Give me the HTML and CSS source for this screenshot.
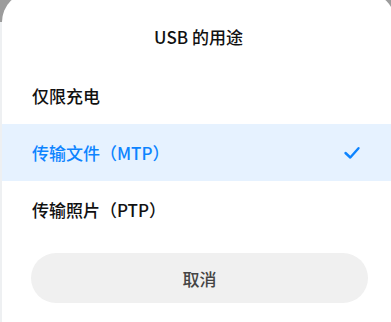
FILE: index.html
```html
<!DOCTYPE html>
<html lang="zh">
<head>
<meta charset="utf-8">
<link rel="stylesheet" href="styles.css">
</head>
<body>
<div class="sheet">
  <div class="title">USB 的用途</div>
  <div class="list">
    <div class="item">仅限充电</div>
    <div class="item selected">传输文件（MTP）
      <svg class="check" width="18" height="14" viewBox="0 0 18 14"><path d="M2.5 7 L7.3 11.5 L15.5 2.2" fill="none" stroke="#0d84ff" stroke-width="2.4" stroke-linecap="round" stroke-linejoin="round"/></svg>
    </div>
    <div class="item">传输照片（PTP）</div>
  </div>
  <div class="actions">
    <div class="cancel">取消</div>
  </div>
</div>
</body>
</html>
```
FILE: styles.css
```css
html, body {
  margin: 0;
  padding: 0;
  width: 391px;
  height: 322px;
  overflow: hidden;
}
body {
  background: linear-gradient(#9c9c9c 0, #9c9c9c 22px, #eef0f2 22px);
  font-family: "Noto Sans CJK SC", "Noto Sans", sans-serif;
}
.sheet {
  margin-top: -8px;
  margin-left: 2px;
  width: 393px;
  height: 340px;
  background: #fff;
  border-radius: 30px 30px 0 0;
  padding-top: 8px;
  box-sizing: border-box;
}
.title {
  height: 62px;
  padding-top: 5px;
  display: flex;
  align-items: center;
  justify-content: center;
  font-size: 17px;
  font-weight: 500;
  color: #111;
}
.list {
  display: flex;
  flex-direction: column;
}
.item {
  height: 57px;
  display: flex;
  align-items: center;
  justify-content: space-between;
  padding: 0 31px 0 30px;
  font-size: 17px;
  color: #111;
  font-weight: 500;
}
.item.selected {
  background: #e6f2ff;
  color: #0d84ff;
}
.check {
  display: block;
  margin-right: 3px;
}
.actions {
  padding: 15px 27px 0 29px;
}
.cancel {
  height: 50px;
  border-radius: 25px;
  background: #f0f0f0;
  display: flex;
  align-items: center;
  justify-content: center;
  font-size: 17px;
  color: #444;
  font-weight: 500;
}
```
